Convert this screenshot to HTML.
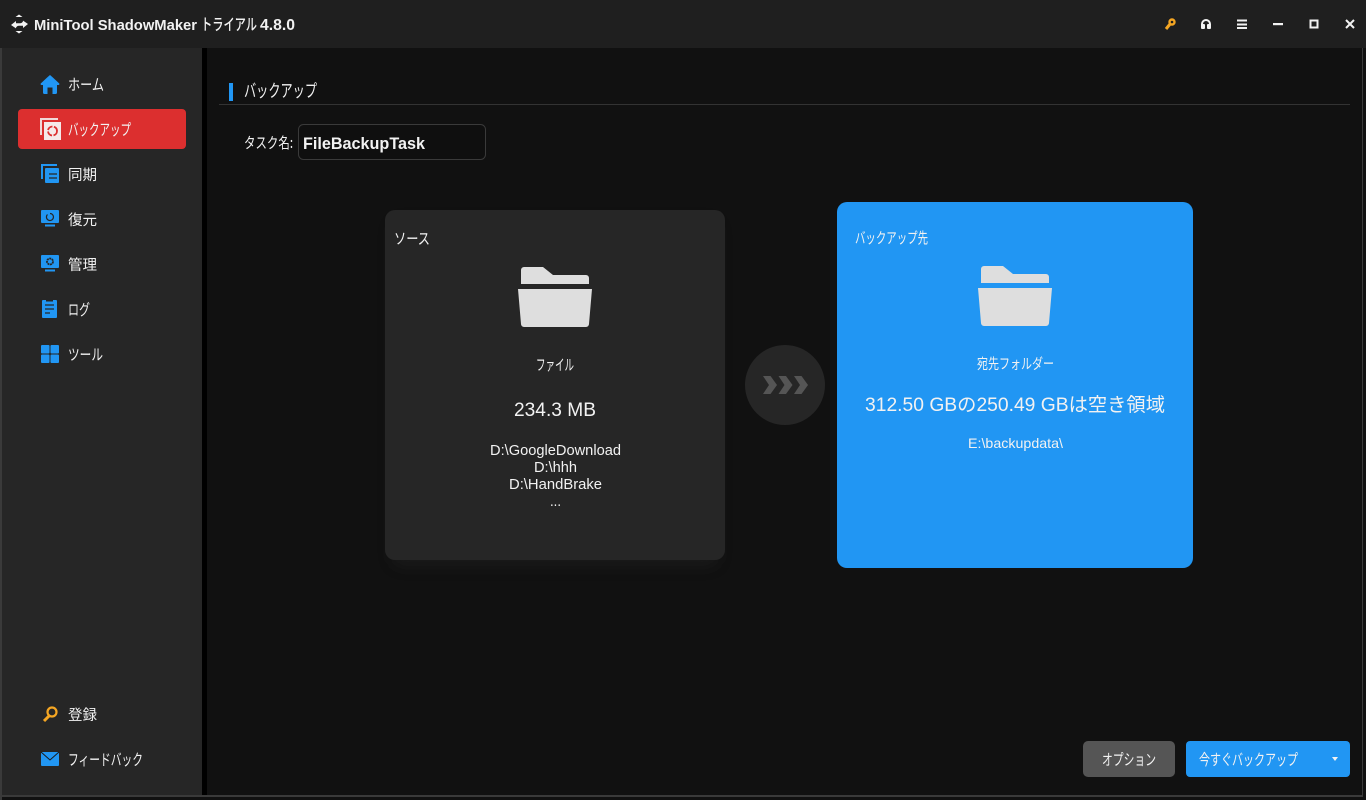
<!DOCTYPE html>
<html lang="ja"><head><meta charset="utf-8"><title>MiniTool ShadowMaker</title>
<style>
html,body{margin:0;padding:0;background:#111;width:1366px;height:800px;overflow:hidden}
svg{display:block}
text{font-family:"Liberation Sans","Noto Sans CJK JP",sans-serif;fill:#f2f2f2;font-size:15px}
.c{font-family:"Noto Sans CJK JP","Liberation Sans",sans-serif;font-size:15.500px}
</style></head><body>
<svg width="1366" height="800" viewBox="0 0 1366 800" xmlns="http://www.w3.org/2000/svg">
<defs><filter id="s" x="-15%" y="-15%" width="130%" height="130%"><feGaussianBlur stdDeviation="7"/></filter></defs>
<rect width="1366" height="800" fill="#111"/>
<rect width="1366" height="48" fill="#1f1f1f"/>
<rect x="0" y="48" width="2" height="752" fill="#3a3a3a"/>
<rect x="2" y="48" width="200" height="747" fill="#262626"/>
<rect x="202" y="48" width="5" height="747" fill="#000"/>
<rect x="0" y="795" width="1363" height="2" fill="#3a3a3a"/>
<rect x="1362" y="48" width="1" height="749" fill="#3a3a3a"/>

<!-- Title bar -->
<g fill="#f2f2f2">
<path d="M19 14.500l-3.500 2.500h7zM19 33.500l-3.500-2.500h7z"/>
<path d="M11 25l5-4v2.200h4c1.500 0 2.300-.8 3-2l2 1.200c-1 1.800-2.600 3-5 3h-4v3z"/>
<path d="M28 24l-5 4v-2.200h-4c-1.500 0-2.300.8-3 2l-2-1.200c1-1.800 2.600-3 5-3h4v-3z"/>
</g>
<text x="34" y="30" textLength="163" lengthAdjust="spacingAndGlyphs" font-weight="700" style="font-size:15px">MiniTool ShadowMaker</text>
<text class="c" x="201" y="30" textLength="56" lengthAdjust="spacingAndGlyphs" font-weight="500" style="font-size:16px">トライアル</text>
<text x="260" y="30" textLength="35" lengthAdjust="spacingAndGlyphs" font-weight="700" style="font-size:16px">4.8.0</text>

<g>
<path d="M1166 29l4.500-5.500" stroke="#f5a623" stroke-width="3" fill="none"/>
<circle cx="1172" cy="22" r="2.500" fill="none" stroke="#f5a623" stroke-width="2.400"/>
<path d="M1202 27v-3a4 4 0 0 1 8 0v3" stroke="#f2f2f2" stroke-width="2" fill="none"/>
<rect x="1201" y="24" width="4" height="5" rx="1" fill="#f2f2f2"/><rect x="1207" y="24" width="4" height="5" rx="1" fill="#f2f2f2"/>
<path d="M1237 20.500h10M1237 24.500h10M1237 28h10" stroke="#f2f2f2" stroke-width="2"/>
<rect x="1273" y="23" width="10" height="2.200" fill="#f2f2f2"/>
<rect x="1310.500" y="20.500" width="7" height="7" fill="none" stroke="#f2f2f2" stroke-width="2"/>
<path d="M1346 20l8 8M1354 20l-8 8" stroke="#f2f2f2" stroke-width="2"/>
</g>

<!-- Sidebar -->
<rect x="18" y="109" width="168" height="40" rx="4" fill="#dc2f2f"/>

<path d="M50 75l3 2.600 6 5.600a1 1 0 0 1-.8 1.800h-1.200v7.500a1.500 1.500 0 0 1-1.500 1.500h-3v-6.500h-5v6.500h-3a1.500 1.500 0 0 1-1.500-1.500v-7.500h-1.200a1 1 0 0 1-.8-1.800l6-5.600z" fill="#2196f3"/>

<g>
<path d="M40 135v-17h18v2h-16v15z" fill="#f0d8d8"/>
<rect x="44" y="122" width="17" height="18" fill="#f5e9e9"/>
<circle cx="52.500" cy="131" r="4.500" fill="none" stroke="#dc2f2f" stroke-width="1.800" stroke-dasharray="6 1.500"/>
</g>

<g>
<path d="M41 179v-15h16v2h-14v13z" fill="#2196f3"/>
<rect x="45" y="168" width="14" height="15" rx="1" fill="#2196f3"/>
<path d="M49 174h8M49 178h8" stroke="#262626" stroke-width="1.200"/>
</g>

<g>
<rect x="41" y="210" width="18" height="13" rx="1" fill="#2196f3"/>
<rect x="45" y="224.500" width="10" height="2" fill="#2196f3"/>
<path d="M47.500 214.500a3.500 3.500 0 1 0 2.500-1" stroke="#262626" stroke-width="1.200" fill="none"/>
</g>

<g>
<rect x="41" y="255" width="18" height="13" rx="1" fill="#2196f3"/>
<rect x="45" y="269.500" width="10" height="2" fill="#2196f3"/>
<circle cx="50" cy="261.500" r="3" fill="none" stroke="#262626" stroke-width="1.800" stroke-dasharray="2 .6"/>
</g>

<g>
<rect x="42" y="300" width="15" height="18" rx="1" fill="#2196f3"/>
<rect x="46" y="299" width="7" height="2.500" fill="#262626"/>
<path d="M45 305h9M45 309h9M45 313h5" stroke="#262626" stroke-width="1.200"/>
</g>

<g fill="#2196f3">
<rect x="41" y="345" width="8.500" height="8.500" rx="1"/><rect x="50.500" y="345" width="8.500" height="8.500" rx="1"/>
<rect x="41" y="354.500" width="8.500" height="8.500" rx="1"/><rect x="50.500" y="354.500" width="8.500" height="8.500" rx="1"/>
</g>

<g>
<circle cx="52" cy="712" r="4.500" fill="none" stroke="#f5a623" stroke-width="2.200"/>
<path d="M49 716l-5 5" stroke="#f5a623" stroke-width="3"/>
</g>

<g>
<rect x="41" y="752" width="18" height="14" rx="1" fill="#2196f3"/>
<path d="M41 752l9 8 9-8" fill="none" stroke="#1a1a1a" stroke-width="1"/>
</g>

<text class="c" x="68" y="90" textLength="36" lengthAdjust="spacingAndGlyphs">ホーム</text>
<text class="c" x="68" y="135" textLength="63" lengthAdjust="spacingAndGlyphs">バックアップ</text>
<text class="c" x="68" y="180" textLength="29" lengthAdjust="spacingAndGlyphs" style="font-size:14.500px">同期</text>
<text class="c" x="68" y="225" textLength="29" lengthAdjust="spacingAndGlyphs" style="font-size:14.500px">復元</text>
<text class="c" x="68" y="270" textLength="29" lengthAdjust="spacingAndGlyphs" style="font-size:14.500px">管理</text>
<text class="c" x="68" y="315" textLength="22" lengthAdjust="spacingAndGlyphs">ログ</text>
<text class="c" x="68" y="360" textLength="35" lengthAdjust="spacingAndGlyphs">ツール</text>
<text class="c" x="68" y="720" textLength="29" lengthAdjust="spacingAndGlyphs" style="font-size:14.500px">登録</text>
<text class="c" x="68" y="765" textLength="75" lengthAdjust="spacingAndGlyphs">フィードバック</text>

<!-- Header -->
<rect x="229" y="83" width="4" height="18" fill="#2196f3"/>
<rect x="219" y="104" width="1131" height="1" fill="#333"/>
<text class="c" x="244" y="97" textLength="73" lengthAdjust="spacingAndGlyphs" style="font-size:17.500px">バックアップ</text>
<text class="c" x="244" y="148" textLength="49" lengthAdjust="spacingAndGlyphs" style="font-size:15px">タスク名:</text>
<rect x="298.500" y="124.500" width="187" height="35" rx="5" fill="#0f0f0f" stroke="#3a3a3a"/>
<text x="303" y="149" textLength="122" lengthAdjust="spacingAndGlyphs" font-weight="700" style="font-size:17px">FileBackupTask</text>

<!-- Source card -->
<rect x="392" y="222" width="326" height="344" rx="10" fill="#262626" opacity=".4" filter="url(#s)"/>
<rect x="385" y="210" width="340" height="350" rx="10" fill="#262626"/>
<text class="c" x="394" y="244" textLength="36" lengthAdjust="spacingAndGlyphs">ソース</text>
<g fill="#dedede">
<path d="M521 284v-14a3 3 0 0 1 3-3h19l10 8h33a3 3 0 0 1 3 3v6z"/>
<path d="M518 289h74l-3 35a3 3 0 0 1-3 3h-62a3 3 0 0 1-3-3z"/>
</g>
<text class="c" x="536" y="370" textLength="38" lengthAdjust="spacingAndGlyphs" style="font-size:15px">ファイル</text>
<text x="514" y="416" textLength="82" lengthAdjust="spacingAndGlyphs" style="font-size:19.500px">234.3 MB</text>
<text x="490" y="455" textLength="131" lengthAdjust="spacingAndGlyphs">D:\GoogleDownload</text>
<text x="534" y="472" textLength="43" lengthAdjust="spacingAndGlyphs">D:\hhh</text>
<text x="509" y="489" textLength="93" lengthAdjust="spacingAndGlyphs">D:\HandBrake</text>
<text x="550" y="506" textLength="11" lengthAdjust="spacingAndGlyphs">...</text>

<!-- Arrow -->
<circle cx="785" cy="385" r="40" fill="#262626"/>
<g fill="#555">
<path d="M763 376h7.500l6.500 9-6.500 9h-7.500l6-9z"/>
<path d="M778.500 376h7.500l6.500 9-6.500 9h-7.500l6-9z"/>
<path d="M794 376h7.500l6.500 9-6.500 9h-7.500l6-9z"/>
</g>

<!-- Destination card -->
<rect x="837" y="202" width="356" height="366" rx="10" fill="#2196f3"/>
<text class="c" x="855" y="243" textLength="73" lengthAdjust="spacingAndGlyphs" style="font-size:15px">バックアップ先</text>
<g fill="#dedede" transform="translate(460 -1)">
<path d="M521 284v-14a3 3 0 0 1 3-3h19l10 8h33a3 3 0 0 1 3 3v6z"/>
<path d="M518 289h74l-3 35a3 3 0 0 1-3 3h-62a3 3 0 0 1-3-3z"/>
</g>
<text class="c" x="977" y="369" textLength="77" lengthAdjust="spacingAndGlyphs" style="font-size:14.500px">宛先フォルダー</text>
<text x="865" y="411" textLength="300" lengthAdjust="spacingAndGlyphs" style="font-size:19px">312.50 GBの250.49 GBは空き領域</text>
<text x="968" y="448" textLength="95" lengthAdjust="spacingAndGlyphs" style="font-size:14px">E:\backupdata\</text>

<!-- Buttons -->
<rect x="1083" y="741" width="92" height="36" rx="5" fill="#555"/>
<text class="c" x="1102" y="765" textLength="54" lengthAdjust="spacingAndGlyphs">オプション</text>
<rect x="1186" y="741" width="164" height="36" rx="4" fill="#2196f3"/>
<text class="c" x="1199" y="765" textLength="99" lengthAdjust="spacingAndGlyphs">今すぐバックアップ</text>
<path d="M1332 757h6l-3 4z" fill="#f2f2f2"/>
</svg>
</body></html>
